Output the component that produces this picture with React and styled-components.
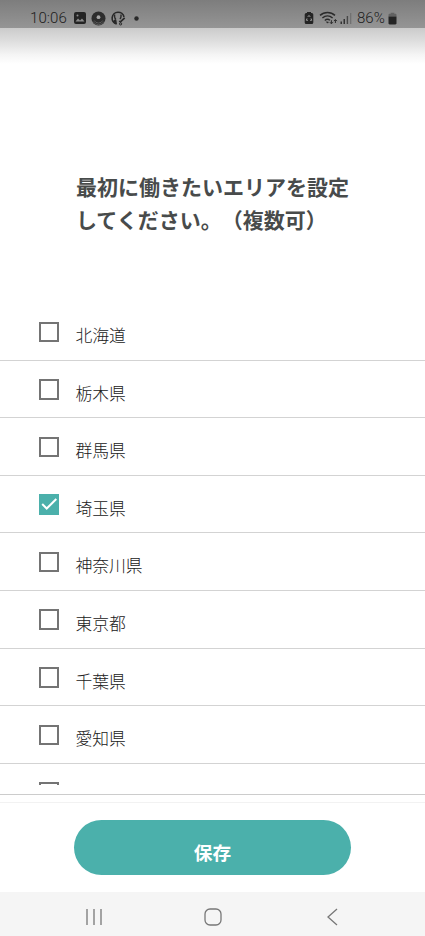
import React, { useState } from 'react';
import styled, { createGlobalStyle } from 'styled-components';

const GlobalStyle = createGlobalStyle`
  * {
    box-sizing: border-box;
  }
  body {
    margin: 0;
    background: #ffffff;
    font-family: 'Noto Sans CJK JP', sans-serif;
  }
`;

const Screen = styled.div`
  display: flex;
  flex-direction: column;
  width: 425px;
  height: 936px;
  overflow: hidden;
  background: #ffffff;
`;

const StatusBar = styled.div`
  display: flex;
  flex: none;
  justify-content: space-between;
  height: 28px;
  padding: 4px 28px 0 30px;
  background: linear-gradient(#7d7d7d, #959595);
  color: #1c1c1c;
  font-family: Roboto, sans-serif;
  font-size: 15px;
  font-weight: 300;
  line-height: 28px;
`;

const StatusGroup = styled.div`
  display: flex;
  align-items: center;
  height: 28px;
  svg {
    display: block;
    flex: none;
  }
`;

const Clock = styled.span`
  width: 43px;
  letter-spacing: 0.1px;
`;

const Percent = styled.span`
  width: 31px;
  margin-left: 5px;
  font-size: 15px;
  white-space: nowrap;
`;

const HeaderShade = styled.div`
  flex: none;
  height: 36px;
  background: linear-gradient(#cbcbcb, #dddddd 35%, #f5f5f5 75%, #ffffff);
`;

const Title = styled.h1`
  flex: none;
  height: 239px;
  margin: 0;
  padding: 106px 70px 0 76px;
  color: #484b4b;
  font-size: 21px;
  font-weight: 700;
  line-height: 33px;
  white-space: nowrap;
  text-spacing-trim: space-all;
`;

const List = styled.ul`
  flex: none;
  height: 482px;
  margin: 0;
  padding: 0;
  overflow: hidden;
  list-style: none;
`;

const Row = styled.li`
  display: flex;
  align-items: flex-start;
  height: 57.6px;
  padding: 18.5px 0 0 38.5px;
  border-bottom: 1px solid #d3d3d3;
`;

const Checkbox = styled.button`
  display: block;
  flex: none;
  width: 20.5px;
  height: 20.5px;
  padding: 0;
  border: 2px solid ${({ $checked }) => ($checked ? '#4bb0ab' : '#747474')};
  background: ${({ $checked }) => ($checked ? '#4bb0ab' : '#ffffff')};
  svg {
    display: block;
  }
`;

const Label = styled.span`
  margin: 1.5px 0 0 16.5px;
  color: #202020;
  font-size: 16.8px;
  font-weight: 300;
  line-height: 25px;
`;

const ListEdge = styled.div`
  flex: none;
  height: 10px;
  border-bottom: 1px solid #cccccc;
`;

const Footer = styled.div`
  flex: none;
  height: 90px;
  margin-top: 7px;
  padding-top: 17px;
  border-top: 1px solid #f2f2f2;
`;

const SaveButton = styled.button`
  display: block;
  width: 277px;
  height: 55px;
  margin: 0 auto;
  padding: 9px 0 0;
  border: 0;
  border-radius: 28px;
  background: #4bb0ab;
  color: #ffffff;
  font-family: inherit;
  font-size: 18.7px;
  font-weight: 700;
  line-height: 28px;
`;

const NavBar = styled.nav`
  display: flex;
  flex: none;
  align-items: center;
  height: 44px;
  padding: 6px 0 0 83px;
  background: #f5f5f5;
  svg {
    display: block;
    fill: none;
    stroke: #777777;
    stroke-width: 1.3;
  }
  svg:nth-child(2) {
    margin: 0 102px 0 98px;
  }
`;

const PictureIcon = () => (
  <svg width='14' height='14' viewBox='0 0 14 14'>
    <rect x='1' y='1' width='12' height='12' rx='2' fill='#242424' />
    <path d='M2.5 10.5 5 7.5l2 2 2-2 2.5 3z' fill='#8d8d8d' />
    <circle cx='4.5' cy='4.5' r='1' fill='#8d8d8d' />
  </svg>
);

const RecordIcon = () => (
  <svg width='15' height='15' viewBox='0 0 15 15'>
    <circle cx='7.5' cy='7.5' r='7' fill='#2d2d2d' />
    <path d='M3.2 9.5a4.9 4.9 0 0 0 8.6 0M2 10.5a6.3 6.3 0 0 0 11 0' fill='none' stroke='#777777' strokeWidth='0.6' />
    <circle cx='7.5' cy='6.2' r='1.9' fill='#a5a5a5' />
  </svg>
);

const ProfileIcon = () => (
  <svg width='15' height='15' viewBox='0 0 15 15' fill='none' stroke='#292929'>
    <path d='M5.5 13A6 6 0 1 1 13 6' strokeWidth='1.6' />
    <path d='M2 10.8c.8-1.5 1.7-2 2.9-2.2l.6 4.2z' fill='#292929' strokeWidth='0.8' />
    <path d='M3.6 3.5v2c0 1.3.5 2.2 1.3 2.8M10 3.5v2c0 1.1-.4 1.9-1.1 2.5' strokeWidth='1.4' />
    <path d='m9.4 10.8 4.3-4' strokeWidth='1.7' />
    <path d='m8.2 9.9 1.7 1.5' strokeWidth='1.4' />
    <circle cx='9.6' cy='12.9' r='1.1' strokeWidth='1' />
  </svg>
);

const DotIcon = () => (
  <svg width='5' height='5' viewBox='0 0 5 5'>
    <circle cx='2.5' cy='2.5' r='2.2' fill='#292929' />
  </svg>
);

const BatterySaverIcon = () => (
  <svg width='10' height='14' viewBox='0 0 10 14'>
    <path d='M3 1h4v1h.8A1.5 1.5 0 0 1 9.3 3.5v8a1.5 1.5 0 0 1-1.5 1.5H2.2A1.5 1.5 0 0 1 .7 11.5v-8A1.5 1.5 0 0 1 2.2 2H3z' fill='#242424' />
    <path d='m3.7 6 1.3-1.6L6.3 6M7 7.4l.8 1.9H6M4 9.3H2.3L3 7.4' fill='none' stroke='#a0a0a0' strokeWidth='0.9' />
  </svg>
);

const WifiIcon = () => (
  <svg width='19' height='14' viewBox='0 0 19 14' fill='none' stroke='#2b2b2b'>
    <path d='M1 4.4C5.2.5 11.8.5 16 4.4' strokeWidth='1.5' />
    <path d='M3.4 7c3-2.7 7.2-2.7 10.2 0' strokeWidth='1.4' />
    <path d='M5.8 9.4c1.6-1.4 3.7-1.4 5.2-.1' strokeWidth='1.3' />
    <path d='m7.3 10.8 1.2 1.4 1-1.1z' fill='#2b2b2b' strokeWidth='0.5' />
    <path d='M12.4 9.2v3.3m-1.5-1.3 1.5 1.6 1.5-1.6M16.4 12V8.8m-1.5 1.3 1.5-1.6 1.5 1.6' strokeWidth='1' />
  </svg>
);

const SignalIcon = () => (
  <svg width='12' height='12' viewBox='0 0 12 12'>
    <path d='M.5 9.5H2V12H.5zM3.5 7H5v5H3.5z' fill='#333333' />
    <path d='M6.7 4h1.4v8H6.7z' fill='#484848' />
    <path d='M10 1h1.3v11H10z' fill='#717171' />
  </svg>
);

const BatteryIcon = () => (
  <svg width='9' height='13' viewBox='0 0 9 13'>
    <path d='M2.7.7h3.6v1h.9c.8 0 1.3.5 1.3 1.3v1.5H.5V3c0-.8.5-1.3 1.3-1.3h.9z' fill='#626262' />
    <path d='M.5 4.5h8v6.8c0 .7-.5 1.2-1.2 1.2H1.7c-.7 0-1.2-.5-1.2-1.2z' fill='#242424' />
  </svg>
);

const CheckIcon = () => (
  <svg width='17' height='17' viewBox='0 0 17 17' fill='none' stroke='#ffffff' strokeWidth='2'>
    <path d='m1.2 8 4.5 4.5L15.3 3' />
  </svg>
);

const areas = ['北海道', '栃木県', '群馬県', '埼玉県', '神奈川県', '東京都', '千葉県', '愛知県', ''];

const AreaRow = ({ name, checked, onToggle }) => (
  <Row>
    <Checkbox $checked={checked} onClick={onToggle} role='checkbox' aria-checked={checked}>
      {checked && <CheckIcon />}
    </Checkbox>
    <Label>{name}</Label>
  </Row>
);

const IconGap = styled.span`
  flex: none;
  width: ${({ $size }) => $size}px;
`;

const App = () => {
  const [selected, setSelected] = useState(['埼玉県']);

  const toggle = (area) => {
    setSelected(selected.includes(area) ? selected.filter((item) => item !== area) : [...selected, area]);
  };

  return (
    <>
      <GlobalStyle />
      <Screen>
        <StatusBar>
          <StatusGroup>
            <Clock>10:06</Clock>
            <PictureIcon />
            <IconGap $size={4} />
            <RecordIcon />
            <IconGap $size={5} />
            <ProfileIcon />
            <IconGap $size={7.5} />
            <DotIcon />
          </StatusGroup>
          <StatusGroup>
            <BatterySaverIcon />
            <IconGap $size={5} />
            <WifiIcon />
            <IconGap $size={2} />
            <SignalIcon />
            <Percent>86%</Percent>
            <BatteryIcon />
          </StatusGroup>
        </StatusBar>
        <HeaderShade />
        <Title>
          最初に働きたいエリアを設定
          <br />
          してください。（複数可）
        </Title>
        <List>
          {areas.map((area) => (
            <AreaRow key={area} name={area} checked={selected.includes(area)} onToggle={() => toggle(area)} />
          ))}
        </List>
        <ListEdge />
        <Footer>
          <SaveButton>保存</SaveButton>
        </Footer>
        <NavBar>
          <svg width='22' height='20' viewBox='0 0 22 20'>
            <path d='M4 2v16M11 2v16M18 2v16' />
          </svg>
          <svg width='20' height='20' viewBox='0 0 20 20'>
            <rect x='2' y='2' width='16' height='16' rx='5' />
          </svg>
          <svg width='16' height='20' viewBox='0 0 16 20'>
            <path d='m12 2-9 8 9 8' />
          </svg>
        </NavBar>
      </Screen>
    </>
  );
};

export default App;
